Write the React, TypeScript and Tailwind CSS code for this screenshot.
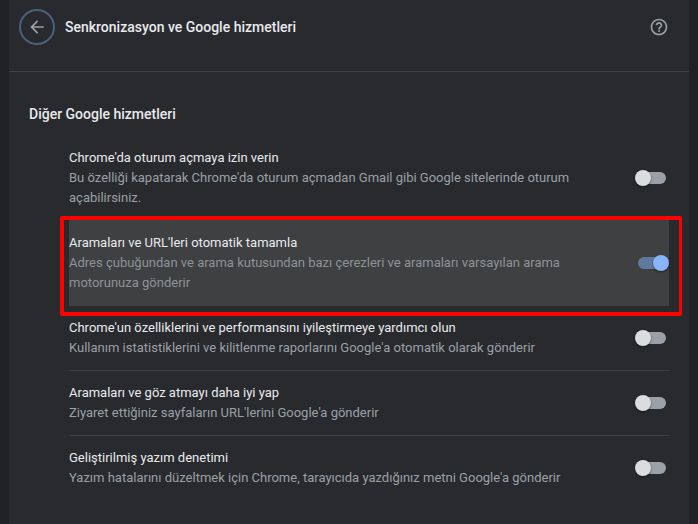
const font = { fontFamily: "Roboto, 'Noto Sans', sans-serif" };

function Toggle({ on = false }: { on?: boolean }) {
  return (
    <div className={`relative h-3 w-7 shrink-0 rounded-md ${on ? "bg-[#62799f]" : "bg-[#9aa0a6]"}`}>
      <div
        className={`absolute top-[-2px] h-4 w-4 rounded-full shadow-[0_1px_2px_rgba(0,0,0,0.5)] ${
          on ? "right-[-3px] bg-[#8ab4f8]" : "left-[-3px] bg-[#dadce0]"
        }`}
      />
    </div>
  );
}

function Row({
  title,
  desc,
  on,
  border,
  dim,
}: {
  title: string;
  desc: React.ReactNode;
  on?: boolean;
  border?: boolean;
  dim?: boolean;
}) {
  return (
    <div className={`flex items-center justify-between pr-[3px] ${border ? "border-t border-[#3f4043]" : ""}`}>
      <div className="w-[530px] py-3">
        <div className="text-[13px] leading-5 text-[#e8eaed]">{title}</div>
        <div className={`text-[13px] leading-5 ${dim ? "text-[#8e9297]" : "text-[#9aa0a6]"}`}>{desc}</div>
      </div>
      <Toggle on={on} />
    </div>
  );
}

export default function App() {
  return (
    <div style={font} className="h-[524px] w-[698px] overflow-hidden bg-[#202124] px-[9px]">
      <div className="h-full bg-[#292a2d]">
        <header className="flex h-[72px] border-b border-[#3f4043] pl-[10px] pr-5 pt-[9px]">
          <div className="flex h-9 w-9 items-center justify-center rounded-full border-2 border-[#4b5f80]">
            <svg width="20" height="20" viewBox="0 0 24 24" fill="#9aa0a6">
              <path d="M20 11H7.83l5.59-5.59L12 4l-8 8 8 8 1.41-1.41L7.83 13H20v-2z" />
            </svg>
          </div>
          <h1 className="ml-[10px] h-9 text-sm font-medium leading-9 text-[#e8eaed]">
            Senkronizasyon ve Google hizmetleri
          </h1>
          <div className="ml-auto flex h-9 items-center">
            <svg width="20" height="20" viewBox="0 0 24 24" fill="#9aa0a6">
              <path d="M11 18h2v-2h-2v2zm1-16C6.48 2 2 6.48 2 12s4.48 10 10 10 10-4.48 10-10S17.52 2 12 2zm0 18c-4.41 0-8-3.59-8-8s3.59-8 8-8 8 3.59 8 8-3.59 8-8 8zm0-14c-2.21 0-4 1.79-4 4h2c0-1.1.9-2 2-2s2 .9 2 2c0 2-3 1.75-3 5h2c0-2.25 3-2.5 3-5 0-2.21-1.79-4-4-4z" />
            </svg>
          </div>
        </header>
        <h2 className="ml-5 mt-8 text-sm font-medium leading-5 text-[#e8eaed]">Diğer Google hizmetleri</h2>
        <div className="ml-[60px] mr-5 mt-3">
          <Row
            title="Chrome'da oturum açmaya izin verin"
            desc="Bu özelliği kapatarak Chrome'da oturum açmadan Gmail gibi Google sitelerinde oturum açabilirsiniz."
          />
          <div className="relative bg-[#3f4042] pb-px">
            <Row
              border
              dim
              on
              title="Aramaları ve URL'leri otomatik tamamla"
              desc="Adres çubuğundan ve arama kutusundan bazı çerezleri ve aramaları varsayılan arama motorunuza gönderir"
            />
            <div className="pointer-events-none absolute bottom-[-10px] left-[-9px] right-[-13px] top-[-4px] rounded-[2px] border-[4px] border-r-[3px] border-[#fe0000]" />
          </div>
          <Row
            title="Chrome'un özelliklerini ve performansını iyileştirmeye yardımcı olun"
            desc="Kullanım istatistiklerini ve kilitlenme raporlarını Google'a otomatik olarak gönderir"
          />
          <Row
            border
            title="Aramaları ve göz atmayı daha iyi yap"
            desc="Ziyaret ettiğiniz sayfaların URL'lerini Google'a gönderir"
          />
          <Row
            border
            title="Geliştirilmiş yazım denetimi"
            desc="Yazım hatalarını düzeltmek için Chrome, tarayıcıda yazdığınız metni Google'a gönderir"
          />
        </div>
      </div>
    </div>
  );
}
